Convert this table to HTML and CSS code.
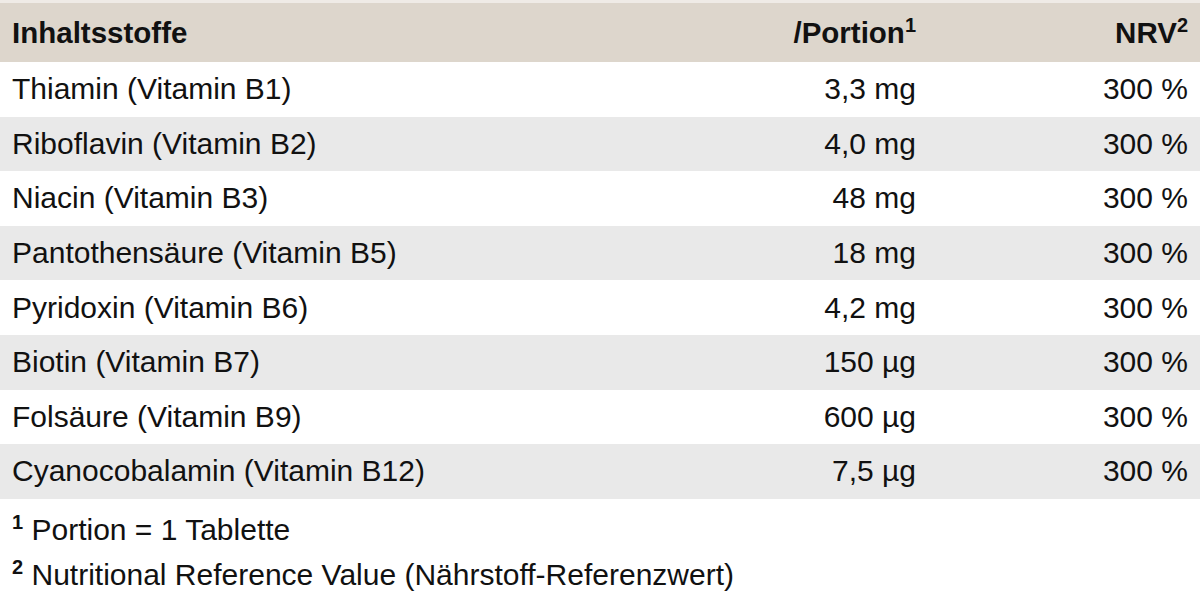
FILE: index.html
```html
<!DOCTYPE html>
<html lang="de">
<head>
<meta charset="utf-8">
<link rel="stylesheet" href="styles.css">
</head>
<body>
<table class="nutri">
  <colgroup>
    <col class="c-name">
    <col class="c-num">
    <col class="c-nrv">
  </colgroup>
  <thead>
    <tr>
      <th class="name">Inhaltsstoffe</th>
      <th class="num">/Portion<sup>1</sup></th>
      <th class="nrv">NRV<sup>2</sup></th>
    </tr>
  </thead>
  <tbody>
    <tr><td class="name">Thiamin (Vitamin B1)</td><td class="num">3,3 mg</td><td class="nrv">300 %</td></tr>
    <tr><td class="name">Riboflavin (Vitamin B2)</td><td class="num">4,0 mg</td><td class="nrv">300 %</td></tr>
    <tr><td class="name">Niacin (Vitamin B3)</td><td class="num">48 mg</td><td class="nrv">300 %</td></tr>
    <tr><td class="name">Pantothensäure (Vitamin B5)</td><td class="num">18 mg</td><td class="nrv">300 %</td></tr>
    <tr><td class="name">Pyridoxin (Vitamin B6)</td><td class="num">4,2 mg</td><td class="nrv">300 %</td></tr>
    <tr><td class="name">Biotin (Vitamin B7)</td><td class="num">150 µg</td><td class="nrv">300 %</td></tr>
    <tr><td class="name">Folsäure (Vitamin B9)</td><td class="num">600 µg</td><td class="nrv">300 %</td></tr>
    <tr><td class="name">Cyanocobalamin (Vitamin B12)</td><td class="num">7,5 µg</td><td class="nrv">300 %</td></tr>
  </tbody>
</table>
<div class="notes">
  <p><sup>1</sup> Portion = 1 Tablette</p>
  <p><sup>2</sup> Nutritional Reference Value (Nährstoff-Referenzwert)</p>
</div>
</body>
</html>
```
FILE: styles.css
```css
html, body {
  margin: 0;
  padding: 0;
  background: #fff;
}
body {
  font-family: "Liberation Sans", Arial, sans-serif;
  color: #111;
}
.nutri {
  width: 1200px;
  table-layout: fixed;
  border-collapse: collapse;
  border-top: 3px solid #efebe6;
  font-size: 30px;
}
.c-name { width: 628px; }
.c-num { width: 300px; }
.c-nrv { width: 272px; }
.nutri th,
.nutri td {
  padding: 0 12px;
  height: 54.6px;
  line-height: 32px;
  vertical-align: middle;
  white-space: nowrap;
}
.nutri thead th {
  background: #ddd6cc;
  font-weight: bold;
  font-size: 29.5px;
  height: 59px;
}
.nutri .name {
  text-align: left;
}
.nutri .num,
.nutri .nrv {
  text-align: right;
}
.nutri tbody tr:nth-child(even) td {
  background: #e9e9e9;
}
.nutri sup {
  font-size: 20px;
  line-height: 0;
  vertical-align: 11px;
}
.notes {
  padding: 8px 12px 0 12px;
  font-size: 30px;
}
.notes p {
  margin: 0;
  line-height: 45px;
}
.notes sup {
  font-size: 20px;
  font-weight: bold;
  line-height: 0;
  vertical-align: 11px;
}
```
